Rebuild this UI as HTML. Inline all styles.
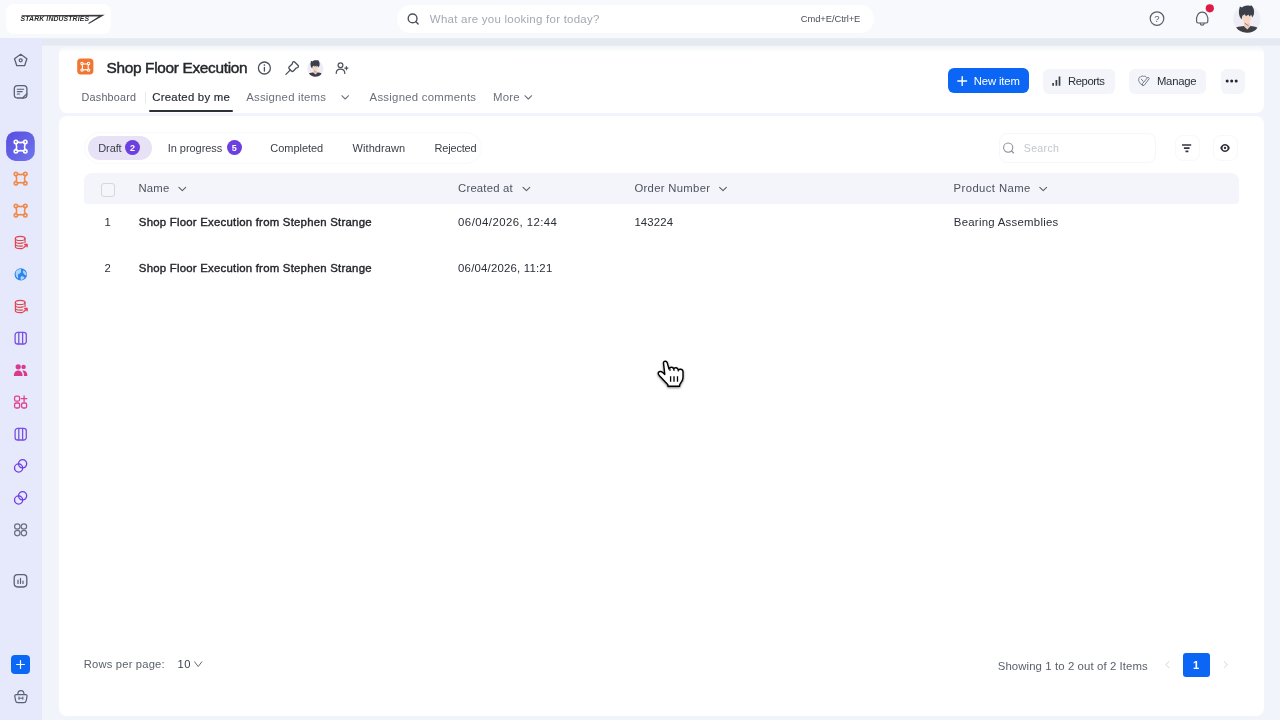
<!DOCTYPE html>
<html lang="en">
<head>
<meta charset="utf-8">
<title>Shop Floor Execution</title>
<style>
*{box-sizing:border-box;margin:0;padding:0}
html,body{width:1280px;height:720px;overflow:hidden}
body{font-family:"Liberation Sans",sans-serif;background:#f1f4fb;color:#2b2f38;position:relative;-webkit-font-smoothing:antialiased}
.abs{position:absolute}
.t{position:absolute;white-space:nowrap;line-height:1}
#topbar{left:0;top:0;width:1280px;height:38px;background:#f8f9fc}
#band{left:0;top:38px;width:1280px;height:8px;background:linear-gradient(#eceff5 0,#e5e9f1 1px,#e5e9f1 6.5px,#eceff5 8px)}
#sidebar{left:0;top:38px;width:41.5px;height:682px;background:#e5e9fb}
#logobox{left:6px;top:4px;width:105px;height:30px;background:#fff;border-radius:8px}
#search{left:397px;top:5px;width:477px;height:28px;background:#fff;border-radius:14px}
#card1{left:59px;top:46px;width:1205px;height:67px;background:linear-gradient(#f3f5f8 0,#fafbfc 4px,#fff 7px);border-radius:8px}
#card2{left:59px;top:116px;width:1205px;height:600px;background:#fff;border-radius:8px}
#thead{left:84px;top:173px;width:1154.5px;height:30.5px;background:#f3f5fb;border-radius:8px 8px 3px 3px}
svg{position:absolute;overflow:visible}
</style>
</head>
<body>
<div id="root" style="position:absolute;left:0;top:0;width:1280px;height:720px;will-change:transform;overflow:hidden">
<div class="abs" id="topbar"></div>
<div class="abs" id="band"></div>
<div class="abs" id="sidebar"></div>
<div class="abs" id="logobox"></div>
<div class="abs" id="search"></div>
<div class="abs" id="card1"></div>
<div class="abs" id="card2"></div>
<div class="abs" id="thead"></div>

<!-- TOPBAR -->
<div class="t" id="logo" style="left:20.60px;top:16.40px;font-size:6.80px;font-weight:bold;font-style:italic;color:#2a2a2e;letter-spacing:0.158px">STARK INDUSTRIES</div>
<div class="t" id="ph" style="left:429.80px;top:13.55px;font-size:11.50px;color:#a4a8b3;letter-spacing:0.241px">What are you looking for today?</div>
<div class="t" id="kbd" style="left:800.80px;top:14.10px;font-size:9.40px;color:#4a4e58;letter-spacing:-0.080px">Cmd+E/Ctrl+E</div>

<div class="t" id="q" style="left:1154.3px;top:14.2px;font-size:9.5px;color:#5a5e68">?</div>
<!-- HEADER CARD -->
<div class="t" id="title" style="left:106.50px;top:60.10px;font-size:15.40px;color:#25272d;-webkit-text-stroke:0.45px #25272d;letter-spacing:-0.321px">Shop Floor Execution</div>
<div class="t" id="tab1" style="left:81.60px;top:91.90px;font-size:10.80px;color:#5f6470;letter-spacing:0.198px">Dashboard</div>
<div class="t" id="tab2" style="-webkit-text-stroke:0.2px #2b2f38;left:152.30px;top:91.60px;font-size:11.40px;color:#2b2f38;letter-spacing:0.236px">Created by me</div>
<div class="t" id="tab3" style="left:246.30px;top:91.60px;font-size:11.40px;color:#6b707c;letter-spacing:0.189px">Assigned items</div>
<div class="t" id="tab4" style="left:369.60px;top:91.60px;font-size:11.40px;color:#6b707c;letter-spacing:0.240px">Assigned comments</div>
<div class="t" id="tab5" style="left:493.00px;top:91.60px;font-size:11.40px;color:#6b707c;letter-spacing:0.228px">More</div>
<div class="abs" id="tabline" style="left:149px;top:110px;width:84px;height:2px;background:#2b2f38;border-radius:1px"></div>

<!-- BUTTONS -->
<div class="abs" id="btnNew" style="left:947.600px;top:68.400px;width:81.600px;height:25.100px;background:#0b66f5;border-radius:6px"></div>
<div class="t" id="btnNewT" style="left:973.80px;top:75.65px;font-size:11.30px;color:#fff;letter-spacing:-0.138px">New item</div>
<div class="abs" id="btnRep" style="left:1042.8px;top:68.5px;width:72.6px;height:25px;background:#f3f5fa;border-radius:6px"></div>
<div class="t" id="btnRepT" style="left:1068.00px;top:75.65px;font-size:11.30px;color:#2b2f38;letter-spacing:-0.435px">Reports</div>
<div class="abs" id="btnMan" style="left:1128.5px;top:68.5px;width:77px;height:25px;background:#f3f5fa;border-radius:6px"></div>
<div class="t" id="btnManT" style="left:1156.90px;top:75.65px;font-size:11.30px;color:#2b2f38;letter-spacing:-0.228px">Manage</div>
<div class="abs" id="btnMore" style="left:1220.6px;top:68.5px;width:24px;height:25px;background:#f3f5fa;border-radius:6px"></div>

<!-- FILTER PILLS -->
<div class="abs" style="left:84px;top:132px;width:398px;height:31.500px;border:1px solid #f8f9fb;border-radius:16px"></div>
<div class="abs" style="left:998.500px;top:133px;width:157px;height:29.500px;border:1px solid #f6f7fa;border-radius:8px"></div>
<div class="abs" style="left:1174.500px;top:135px;width:25px;height:26px;border:1px solid #f7f8fb;border-radius:8px"></div>
<div class="abs" style="left:1212.500px;top:135px;width:25px;height:26px;border:1px solid #f7f8fb;border-radius:8px"></div>
<div class="abs" id="pill1" style="left:88px;top:136px;width:64px;height:24px;background:#e7e2f6;border-radius:12px"></div>
<div class="t" id="p1" style="left:98.30px;top:142.80px;font-size:11.00px;color:#3b3f4a;letter-spacing:-0.120px">Draft</div>
<div class="abs" id="bdg1" style="left:125.100px;top:140.400px;width:14.800px;height:14.800px;border-radius:50%;background:#6c3fe0"></div>
<div class="t" id="b1" style="left:130.000px;top:143.600px;font-weight:bold;font-size:9px;color:#fff">2</div>
<div class="t" id="p2" style="left:167.80px;top:142.80px;font-size:11.00px;color:#3b3f4a;letter-spacing:-0.053px">In progress</div>
<div class="abs" id="bdg2" style="left:226.800px;top:140.400px;width:14.800px;height:14.800px;border-radius:50%;background:#6c3fe0"></div>
<div class="t" id="b2" style="left:231.700px;top:143.600px;font-weight:bold;font-size:9px;color:#fff">5</div>
<div class="t" id="p3" style="left:270.30px;top:142.80px;font-size:11.00px;color:#3b3f4a;letter-spacing:-0.035px">Completed</div>
<div class="t" id="p4" style="left:352.50px;top:142.80px;font-size:11.00px;color:#3b3f4a;letter-spacing:0.082px">Withdrawn</div>
<div class="t" id="p5" style="left:434.50px;top:142.80px;font-size:11.00px;color:#3b3f4a;letter-spacing:-0.185px">Rejected</div>

<div class="t" id="srch2" style="left:1023.80px;top:143.00px;font-size:10.60px;color:#c3c7d0;letter-spacing:0.305px">Search</div>

<!-- TABLE -->
<div class="abs" id="cb" style="left:100.5px;top:182.8px;width:14px;height:14px;border:1px solid #d4d7de;border-radius:3px;background:#f5f6fa"></div>
<div class="t" id="h1" style="left:138.50px;top:182.65px;font-size:11.30px;color:#4d525e;letter-spacing:0.216px">Name</div>
<div class="t" id="h2" style="left:458.10px;top:182.65px;font-size:11.30px;color:#4d525e;letter-spacing:0.188px">Created at</div>
<div class="t" id="h3" style="left:634.40px;top:182.65px;font-size:11.30px;color:#4d525e;letter-spacing:0.315px">Order Number</div>
<div class="t" id="h4" style="left:953.60px;top:182.65px;font-size:11.30px;color:#4d525e;letter-spacing:0.407px">Product Name</div>

<div class="t" id="r1n" style="left:104.40px;top:216.65px;font-size:11.30px;color:#2b2f38;letter-spacing:0.000px">1</div>
<div class="t" id="r1a" style="left:138.80px;top:216.60px;font-size:11.40px;color:#25272d;-webkit-text-stroke:0.4px #25272d;letter-spacing:0.231px">Shop Floor Execution from Stephen Strange</div>
<div class="t" id="r1b" style="left:458.10px;top:216.60px;font-size:11.40px;color:#2b2f38;letter-spacing:0.437px">06/04/2026, 12:44</div>
<div class="t" id="r1c" style="left:634.40px;top:216.60px;font-size:11.40px;color:#2b2f38;letter-spacing:0.145px">143224</div>
<div class="t" id="r1d" style="left:953.80px;top:216.60px;font-size:11.40px;color:#2b2f38;letter-spacing:0.261px">Bearing Assemblies</div>

<div class="t" id="r2n" style="left:104.60px;top:262.65px;font-size:11.30px;color:#2b2f38;letter-spacing:0.000px">2</div>
<div class="t" id="r2a" style="left:138.80px;top:262.60px;font-size:11.40px;color:#25272d;-webkit-text-stroke:0.4px #25272d;letter-spacing:0.231px">Shop Floor Execution from Stephen Strange</div>
<div class="t" id="r2b" style="left:458.10px;top:262.60px;font-size:11.40px;color:#2b2f38;letter-spacing:0.196px">06/04/2026, 11:21</div>

<!-- FOOTER -->
<div class="t" id="f1" style="left:83.80px;top:658.70px;font-size:11.20px;color:#5a5f6b;letter-spacing:0.189px">Rows per page:</div>
<div class="t" id="f2" style="left:177.60px;top:658.70px;font-size:11.20px;color:#3b3f4a;letter-spacing:0.378px">10</div>
<div class="t" id="f3" style="left:997.70px;top:660.60px;font-size:11.40px;color:#5a5f6b;letter-spacing:0.092px">Showing 1 to 2 out of 2 Items</div>
<div class="abs" id="pg" style="left:1183px;top:653px;width:27px;height:24px;background:#0b66f5;border-radius:3px"></div>
<div class="t" id="pgT" style="left:1193px;top:660px;font-size:11px;color:#fff;font-weight:bold">1</div>


<!-- ICON OVERLAY -->
<svg id="icons" width="1280" height="720" viewBox="0 0 1280 720" style="left:0;top:0" fill="none" stroke-linecap="round" stroke-linejoin="round">
<defs>
<g id="vsq"><circle cx="-4.7" cy="-4.7" r="1.7"/><circle cx="4.7" cy="-4.7" r="1.7"/><circle cx="-4.7" cy="4.7" r="1.7"/><circle cx="4.7" cy="4.7" r="1.7"/><path d="M-3.100 -4.500Q0 -3.500 3.100 -4.500M-3.100 4.500Q0 3.500 3.100 4.500M-4.500 -3.100Q-3.500 0 -4.500 3.100M4.500 -3.100Q3.500 0 4.500 3.100"/></g>
<g id="cols"><rect x="-5.6" y="-5.8" width="11.2" height="11.6" rx="2.6"/><path d="M-1.9 -5.8V5.8M1.9 -5.8V5.8"/></g>
<g id="lnk"><circle cx="-1.9" cy="2" r="4.1"/><circle cx="2.1" cy="-2.2" r="4.1"/></g>
<g id="db"><ellipse cx="-0.6" cy="-4" rx="4.8" ry="2.1"/><path d="M-5.4 -4V4.2C-5.4 5.4 -3.3 6.3 -0.6 6.3C0.4 6.3 1.3 6.2 2 6M4.2 -4V0.2M-5.4 -1.2C-5.4 0 -3.3 0.9 -0.6 0.9C0.6 0.9 1.7 0.7 2.5 0.4M-5.4 1.6C-5.4 2.8 -3.3 3.7 -0.6 3.7C0.2 3.7 1 3.6 1.6 3.5"/><path d="M3 5.2L6.3 2M6.3 2H3.9M6.3 2V4.4" stroke-width="1.4"/></g>
<g id="av"><circle cx="0" cy="0" r="13.600" fill="#eeecf5"/>
<path d="M-10.800 8.400C-8.000 7.200 -5.000 7.000 -3.000 6.800L3.600 6.800C6.000 7.000 8.600 7.400 10.600 8.600C8.400 11.800 4.600 13.600 0.000 13.600C-4.600 13.600 -8.400 11.600 -10.800 8.400Z" fill="#3f3f46"/>
<path d="M-2.600 2.600L2.600 2.600L3.400 7.000L0.400 10.200L-3.000 7.000Z" fill="#f3cdb9"/>
<path d="M-4.600 -4.600L4.000 -4.600L4.200 -0.600C3.600 2.000 1.600 4.400 0.000 5.200C-2.000 4.400 -4.000 2.000 -4.600 -0.600Z" fill="#f6d6c4"/>
<path d="M-7.400 -3.200C-8.600 -7.000 -7.600 -10.600 -7.000 -12.800L-5.000 -11.600C-3.000 -13.600 1.000 -14.200 3.000 -13.200L4.400 -14.000C6.600 -12.000 7.800 -9.000 7.000 -5.000C6.600 -3.600 6.000 -2.600 5.200 -1.800L4.400 -4.400L2.400 -2.600L1.600 -4.800L-1.000 -3.000L-2.000 -5.000L-4.600 -3.400L-5.200 0.200C-6.200 -0.800 -7.000 -2.000 -7.400 -3.200Z" fill="#3a3f49"/>
<path d="M-1.800 4.200L1.400 6.400" stroke="#6a5a5a" stroke-width="0.700"/></g>
<g id="chev"><path d="M-3.4 -1.6L0 1.7L3.4 -1.6"/></g>
</defs>

<!-- sidebar -->
<g stroke="#596075" stroke-width="1.3">
<path d="M20.7 54.3L26.9 58.8L24.6 65.7H16.8L14.5 58.8Z"/><circle cx="20.7" cy="60.3" r="1.5"/>
<rect x="14.3" y="85.6" width="12.6" height="12.4" rx="3.2"/><path d="M17.3 89.2H23.6M17.3 91.6H22.2M17.3 94H19.6" stroke-width="1.1"/><path d="M26.9 93.6L22.6 98" stroke-width="1.1"/>
</g>
<linearGradient id="ag" x1="0" y1="0" x2="1" y2="1"><stop offset="0" stop-color="#574ce0"/><stop offset="1" stop-color="#6f76eb"/></linearGradient><rect x="6.100" y="131.400" width="28.700" height="29.500" rx="9.500" fill="url(#ag)"/>
<use href="#vsq" x="20.6" y="146.6" stroke="#fff" stroke-width="1.6"/>
<use href="#vsq" x="20.6" y="178.6" stroke="#f0894a" stroke-width="1.6"/>
<use href="#vsq" x="20.6" y="210.6" stroke="#f0894a" stroke-width="1.6"/>
<use href="#db" x="20.8" y="242.4" stroke="#e0464f" stroke-width="1.2"/>
<circle cx="20.800" cy="274.400" r="6.200" fill="#2f83ec"/><path d="M16.000 271.400C17.200 269.600 19.400 268.800 21.200 269.000C20.600 270.400 21.600 271.400 20.800 272.600C20.000 273.800 18.400 273.600 18.000 275.000C17.600 276.200 18.600 277.200 18.000 278.400C16.000 277.200 15.000 274.000 16.000 271.400Z" fill="#a9d6fb" stroke="none"/><path d="M23.600 270.200C25.400 271.200 26.600 273.000 26.600 275.000C25.600 275.400 24.400 275.000 24.000 274.000C23.600 273.000 22.600 272.400 22.800 271.400Z" fill="#a9d6fb" stroke="none"/><path d="M21.000 276.400C22.200 275.800 23.600 276.400 24.600 277.600C23.800 279.000 22.400 279.800 21.000 280.000C20.400 278.800 20.200 277.400 21.000 276.400Z" fill="#a9d6fb" stroke="none"/>
<use href="#db" x="20.8" y="306.4" stroke="#e0464f" stroke-width="1.2"/>
<use href="#cols" x="20.7" y="338.2" stroke="#7a50e2" stroke-width="1.3"/>
<g fill="#d93a8d"><circle cx="18.2" cy="366.8" r="2.6"/><path d="M13.8 375.9C13.8 372.8 15.6 370.6 18.2 370.6C20.8 370.6 22.6 372.8 22.6 375.9Z"/><circle cx="23.6" cy="366.9" r="2.2"/><path d="M23.2 370.5C25.8 370.3 27.4 372.6 27.4 375.9H24C24 373.8 23.6 371.8 22.4 370.7Z"/></g>
<g stroke="#df3f8d" stroke-width="1.3"><rect x="14.6" y="396.2" width="5" height="5" rx="1.5"/><rect x="14.6" y="403" width="5" height="5" rx="1.5"/><rect x="21.6" y="403" width="5" height="5" rx="1.5"/><path d="M24.1 396V401.4M21.4 398.7H26.8"/></g>
<use href="#cols" x="20.7" y="434.2" stroke="#7a50e2" stroke-width="1.3"/>
<use href="#lnk" x="20.5" y="466" stroke="#6d3fe3" stroke-width="1.3"/>
<use href="#lnk" x="20.5" y="498" stroke="#6d3fe3" stroke-width="1.3"/>
<g stroke="#6a7082" stroke-width="1.2"><circle cx="17.3" cy="526.5" r="2.7"/><circle cx="23.9" cy="526.5" r="2.7"/><circle cx="17.3" cy="533.1" r="2.7"/><circle cx="23.9" cy="533.1" r="2.7"/></g>
<g stroke="#596075" stroke-width="1.3"><rect x="14.2" y="574.6" width="12.6" height="12.4" rx="3.4"/><path d="M18 580V583.4M20.5 578.4V583.4M23 581V583.4" stroke-width="1.2"/></g>
<rect x="11" y="655" width="19" height="19" rx="4" fill="#0b68f6"/><path d="M20.5 660.6V668.4M16.6 664.5H24.4" stroke="#fff" stroke-width="1.2"/>
<g stroke="#596075" stroke-width="1.2"><path d="M16.2 694.6H25.6C26.6 694.6 27.2 695.4 27 696.4L26.2 700.6C26 701.8 25 702.6 23.8 702.6H18C16.8 702.6 15.8 701.8 15.6 700.6L14.8 696.4C14.6 695.4 15.2 694.6 16.2 694.6Z"/><path d="M17.8 694.4C17.8 692 19 690.6 20.9 690.6C22.8 690.6 24 692 24 694.4"/><path d="M19 697V699.4M22.8 697V699.4M19 698.2H22.8" stroke-width="1"/></g>

<!-- top bar -->
<g stroke="#4c505a" stroke-width="1.4"><circle cx="412.6" cy="18.4" r="4.4"/><path d="M415.9 21.7L418.2 24"/></g>
<g stroke="#5a5e68" stroke-width="1.2"><circle cx="1157" cy="18.6" r="6.8"/></g>
<g stroke="#5a5e68" stroke-width="1.2"><path d="M1196.600 21.600C1195.800 16.400 1198.200 12.200 1202.200 12.200C1206.200 12.200 1208.600 16.400 1207.800 21.600C1207.600 22.600 1206.800 23.000 1205.800 23.000H1198.600C1197.600 23.000 1196.800 22.600 1196.600 21.600Z"/><path d="M1200.200 23.400C1200.400 24.600 1201.200 25.200 1202.200 25.200C1203.200 25.200 1204.000 24.600 1204.200 23.400"/></g>
<circle cx="1209.800" cy="8.300" r="4.100" fill="#de1b47"/>
<!-- avatar top -->
<use href="#av" x="1246.900" y="19.200"/>

<!-- header card icons -->
<rect x="77.200" y="58.500" width="16.200" height="15.900" rx="3.600" fill="#f27631"/>
<use href="#vsq" transform="translate(85.300 66.800) scale(0.700)" stroke="#fff" stroke-width="1.500"/>
<g stroke="#4c505a" stroke-width="1.300"><circle cx="264.400" cy="68" r="6"/><path d="M264.400 67.400V71"/></g><circle cx="264.400" cy="65" r="0.850" fill="#4c505a"/>
<g stroke="#4c505a" stroke-width="1.300"><path d="M294.400 61.800L298.400 65.800C298.700 66.600 298.400 67.200 297.600 67.600L296.200 68.000L293.200 71.200C292.600 71.600 292.000 71.600 291.400 71.000L289.200 68.800C288.600 68.200 288.600 67.600 289.000 67.000L292.200 64.000L292.600 62.600C293.000 61.800 293.600 61.500 294.400 61.800Z"/><path d="M290.400 69.900L285.900 74.400"/></g>
<use href="#av" transform="translate(315.300 68.500) scale(0.600)"/>
<g stroke="#4c505a" stroke-width="1.200"><circle cx="340.500" cy="65.300" r="2.400"/><path d="M336.200 73.400C336.200 70.600 338.000 69.200 340.500 69.200C343.000 69.200 344.800 70.600 344.800 73.400"/><path d="M346.400 66.500V69.700M344.800 68.100H348.000" stroke-width="1.100"/></g>
<g stroke="#6b707c" stroke-width="1.050"><use href="#chev" x="345.200" y="97.300"/><use href="#chev" x="528.300" y="97.300"/></g>
<path d="M145.500 92V103" stroke="#e6e8ee" stroke-width="1"/>

<!-- buttons -->
<path d="M962.200 76.600V85.400M957.800 81H966.600" stroke="#fff" stroke-width="1.400"/>
<path d="M1053.1 85.7V83M1056.4 85.7V80M1059.5 85.7V76.4" stroke="#3a3e48" stroke-width="1.7" stroke-linecap="butt"/>
<g stroke="#747985" stroke-width="1"><path d="M1141.6 84.4C1140.2 84 1139.6 83 1139.8 82.2C1138.6 81.6 1138.2 80.4 1138.8 79.4C1138.4 78.2 1139.2 77 1140.6 77C1141.2 75.900 1142.6 75.700 1143.6 76.400C1144.8 75.900 1146 76.300 1146.400 77.300"/><path d="M1148.300 77.400L1149.300 78.600L1144.200 85.300L1142.300 85.700L1142.600 83.800Z"/><path d="M1141.400 79.200L1143 81.200"/></g>
<g fill="#25272d"><circle cx="1227.200" cy="81" r="1.500"/><circle cx="1231.700" cy="81" r="1.500"/><circle cx="1236.200" cy="81" r="1.500"/></g>

<!-- table tools -->
<g stroke="#8b909b" stroke-width="1.100"><circle cx="1008.200" cy="147.600" r="4.600"/><path d="M1011.600 151L1013.600 153"/></g>
<path d="M1182.000 145.000H1191.200M1183.900 148.200H1189.600M1185.500 151.400H1188.400" stroke="#33363e" stroke-width="1.700" stroke-linecap="butt"/>
<g><path d="M1220.200 148.000C1221.400 145.200 1223.000 143.900 1225.000 143.900C1227.000 143.900 1228.700 145.200 1229.900 148.000C1228.700 150.800 1227.000 152.100 1225.000 152.100C1223.000 152.100 1221.400 150.800 1220.200 148.000Z" fill="#2f3239"/><circle cx="1225.000" cy="148.000" r="2.500" fill="#fff"/><circle cx="1225.000" cy="148.000" r="1.150" fill="#2f3239"/></g>
<g stroke="#5a5f6b" stroke-width="1.100"><use href="#chev" x="182.300" y="189"/><use href="#chev" x="526.400" y="189"/><use href="#chev" x="723" y="189"/><use href="#chev" x="1043.200" y="189"/></g>
<g stroke="#666b77" stroke-width="1"><path d="M194.600 661.800L198.200 666.600L201.800 661.800"/></g>
<g stroke="#dfe2e9" stroke-width="1.100"><path d="M1169 661.600L1165.800 664.600L1169 667.600M1224.200 661.600L1227.400 664.600L1224.200 667.600"/></g>

<!-- logo swoosh -->
<path d="M21.8 15.2L104.8 14.7L89.2 23.8L88 23.2L98.6 16.4L21.6 16.2Z" fill="#3a3a40" stroke="none"/>

<!-- cursor -->
<g style="filter:drop-shadow(0.5px 1.3px 1px rgba(0,0,0,0.5))">
<path d="M663.500 363.200C663.300 361.900 664.200 361.200 665.300 361.200C666.300 361.200 667.000 361.800 667.200 362.800L669.000 369.000C669.400 367.800 670.400 367.200 671.500 367.200C672.600 367.200 673.400 367.900 673.500 369.000C674.000 368.100 675.000 367.700 676.000 367.800C677.200 367.900 678.000 368.700 678.200 370.000C678.800 369.400 679.600 369.100 680.500 369.200C682.000 369.400 683.000 370.300 683.000 371.800V377.600C683.000 379.200 682.400 380.400 681.600 381.600C680.800 382.800 679.800 384.000 679.600 385.200V386.300H667.900V384.700C665.800 382.500 662.800 379.400 660.400 376.800C659.200 375.500 658.200 374.800 658.200 373.600C658.200 372.400 659.200 371.500 660.400 371.500C661.300 371.500 662.200 372.100 663.000 372.800L664.800 374.400Z" fill="#fff" stroke="#000" stroke-width="1.400" stroke-linejoin="round"/>
<path d="M670.600 376.200V381.800M674.000 376.200V381.800M677.500 376.200V381.800" stroke="#000" stroke-width="1.300" stroke-linecap="butt"/>
<path d="M670.000 368.600V371.000M674.000 368.800V371.000M678.300 369.800V371.400" stroke="#000" stroke-width="1.100" stroke-linecap="butt"/>
</g>
</svg>
</div>
</body>
</html>
